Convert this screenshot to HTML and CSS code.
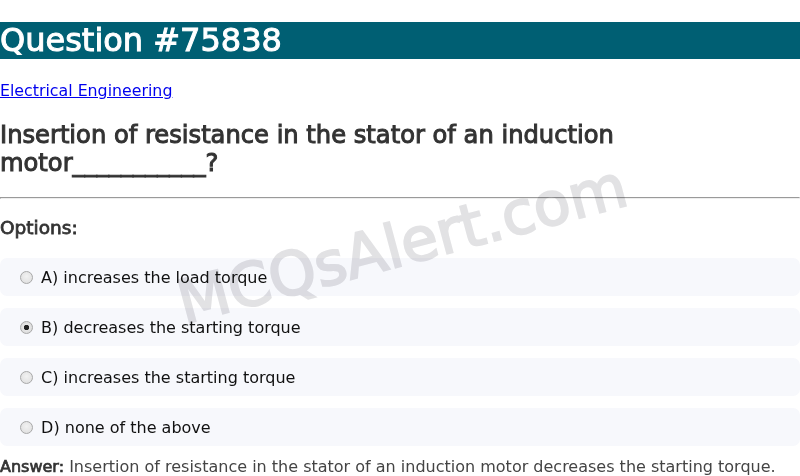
FILE: index.html
```html
<!DOCTYPE html>
<html lang="en">
<head>
<meta charset="utf-8">
<title>Question #75838</title>
<link rel="stylesheet" href="styles.css">
</head>
<body>
<div class="page">
  <h1 class="title">Question #75838</h1>
  <p class="cat"><a href="#">Electrical Engineering</a></p>
  <h2 class="question">Insertion of resistance in the stator of an induction motor___________?</h2>
  <hr class="sep">
  <h3 class="opts-title">Options:</h3>
  <div class="options">
    <label class="option"><input class="radio" type="radio" name="opt"> A) increases the load torque</label>
    <label class="option"><input class="radio" type="radio" name="opt" checked> B) decreases the starting torque</label>
    <label class="option"><input class="radio" type="radio" name="opt"> C) increases the starting torque</label>
    <label class="option"><input class="radio" type="radio" name="opt"> D) none of the above</label>
  </div>
  <p class="answer"><strong class="answer-label">Answer:</strong> Insertion of resistance in the stator of an induction motor decreases the starting torque.</p>
  <div class="watermark">MCQsAlert.com</div>
</div>
</body>
</html>
```
FILE: styles.css
```css
html, body {
  margin: 0;
  padding: 0;
  background: #fff;
}
body {
  font-family: "DejaVu Sans", sans-serif;
  font-size: 16px;
  color: #222;
  overflow: hidden;
}
.page {
  position: relative;
  padding-top: 0.1px;
}
.title {
  font-size: 32px;
  font-weight: normal;
  -webkit-text-stroke: 1px #fff;
  margin: 22px 0 21px;
  background: #005f73;
  color: #fff;
  line-height: 37px;
}
.cat {
  margin: 0;
  font-size: 15.8px;
  line-height: 22px;
}
.cat a {
  color: #0000ee;
}
.question {
  font-size: 24.2px;
  font-weight: normal;
  color: #333;
  -webkit-text-stroke: 1px #333;
  line-height: 28px;
  margin: 19px 0 20px;
}
.sep {
  margin: 0;
}
.opts-title {
  font-size: 18.5px;
  font-weight: normal;
  color: #333;
  -webkit-text-stroke: 0.8px #333;
  margin: 18px 0 19px;
  line-height: 22px;
}
.options {
  display: flex;
  flex-direction: column;
  gap: 12px;
}
.option {
  display: block;
  background: #f7f8fc;
  border-radius: 7px;
  padding: 11px 15px 9px;
  line-height: 18px;
  color: #111;
}
.radio {
  appearance: none;
  -webkit-appearance: none;
  width: 13px;
  height: 13px;
  margin: 0 3px 0 5px;
  vertical-align: -1px;
  border-radius: 50%;
  border: 1px solid #a8a8a8;
  background: radial-gradient(circle at 50% 40%, #f2f2f2 0%, #dcdcdc 100%);
  box-sizing: border-box;
}
.radio:checked {
  background: radial-gradient(circle, #222 0 2.4px, #e6e6e6 3px, #d4d4d4 100%);
}
.answer {
  margin: 12px 0 0;
  color: #444;
  line-height: 18px;
}
.answer-label {
  font-weight: normal;
  color: #333;
  -webkit-text-stroke: 0.7px #333;
}
.watermark {
  position: absolute;
  left: 402px;
  top: 244px;
  transform: translate(-50%, -50%) rotate(-15deg);
  font-size: 60px;
  font-weight: normal;
  color: #e2e2e4;
  -webkit-text-stroke: 2px #e2e2e4;
  mix-blend-mode: multiply;
  white-space: nowrap;
  pointer-events: none;
}
```
